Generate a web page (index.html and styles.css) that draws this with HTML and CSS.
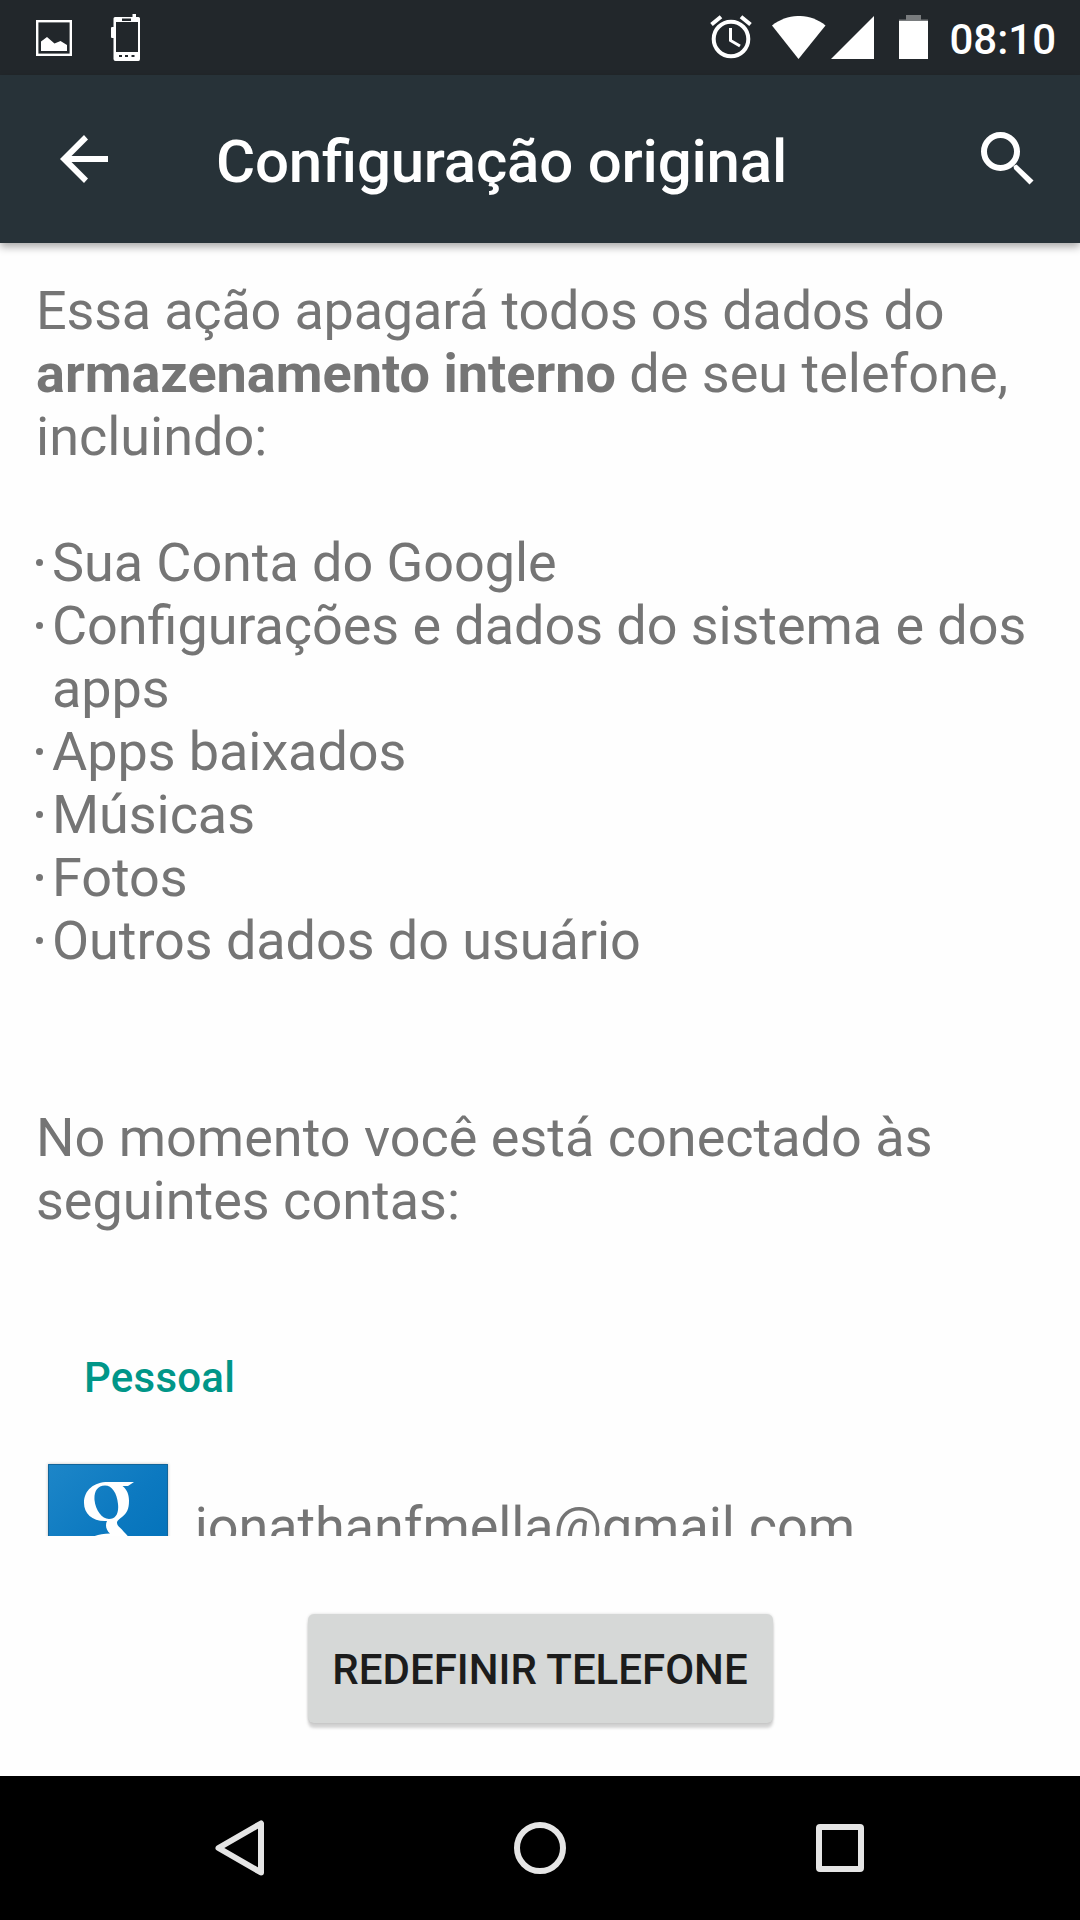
FILE: index.html
```html
<!DOCTYPE html>
<html lang="pt-BR">
<head>
  <meta charset="UTF-8">
  <meta name="viewport" content="width=device-width, initial-scale=1.0">
  <title>Configuração original</title>
  <link rel="stylesheet" href="styles.css">
</head>
<body>

  <div class="status-bar">
    <svg class="picture-icon" width="36" height="36" viewBox="0 0 36 36">
      <rect x="1.2" y="1.2" width="33.6" height="33.6" fill="none" stroke="#fff" stroke-width="2.4"/>
      <path d="M5 31V21.500L11 17L18.500 23.500L24.500 21L31 25V31Z" fill="#fff"/>
    </svg>
    <svg class="phone-icon" width="30" height="48" viewBox="0 0 30 48">
      <path d="M4 3H21.500V0H25V3H27.500Q29 3 29 4.500V45Q29 47 27.500 47H4.500Q2.500 47 2.500 45V24H1Q0 24 0 23V14Q0 13 1 13H2.500V4.500Q2.500 3 4 3ZM5 8V38H27V8ZM11 4.500V7H20V4.500ZM8 41V43H11V41ZM14 41V43H17V41ZM20.500 41V43H23.500V41Z" fill="#fff" fill-rule="evenodd"/>
    </svg>
    <div class="status-right">
      <svg class="alarm-icon" width="42" height="44" viewBox="0 0 42 44">
        <circle cx="21" cy="24" r="17.300" fill="none" stroke="#fff" stroke-width="4"/>
        <path d="M20.500 13V25.500L30 31" fill="none" stroke="#fff" stroke-width="3"/>
        <path d="M1.500 9.500L11 1.700M40.500 9.500L31 1.700" stroke="#fff" stroke-width="4"/>
      </svg>
      <svg class="wifi-icon" width="54" height="43" viewBox="0 0 54 43">
        <path d="M0 9.500C16 -3.200 38 -3.200 53.500 9.500L26.500 43Z" fill="#fff"/>
      </svg>
      <svg class="signal-icon" width="43" height="43" viewBox="0 0 43 43">
        <path d="M0 43L43 0V43Z" fill="#fff"/>
      </svg>
      <svg class="battery-icon" width="29" height="44" viewBox="0 0 29 44">
        <path d="M7 0H22V4.500H29V6H0V4.500H7Z" fill="#797c7e"/>
        <rect y="6" width="29" height="38" fill="#fff"/>
      </svg>
      <span class="clock">08:10</span>
    </div>
  </div>

  <header class="app-bar">
    <svg class="back-icon" width="48" height="48" viewBox="0 0 48 48">
      <path d="M48 21V27H11.500L28 43.600L24 48L0 24L24 0L28 4.400L11.500 21Z" fill="#fff"/>
    </svg>
    <h1 class="title">Configuração original</h1>
    <svg class="search-icon" width="54" height="54" viewBox="0 0 54 54">
      <circle cx="19.500" cy="19.500" r="16.500" fill="none" stroke="#fff" stroke-width="6"/>
      <path d="M32.500 34L35.500 32.500L52.500 48.500L48.500 52.500L33 37Z" fill="#fff"/>
    </svg>
  </header>

  <main class="content">
    <p><span class="tight">Essa ação apagará todos os dados do</span> <b>armazenamento interno</b> de seu telefone, incluindo:</p>
    <ul class="data-list">
      <li>Sua Conta do Google</li>
      <li>Configurações e dados do sistema e dos apps</li>
      <li>Apps baixados</li>
      <li>Músicas</li>
      <li>Fotos</li>
      <li>Outros dados do usuário</li>
    </ul>
    <p class="accounts-text">No momento você está conectado às seguintes contas:</p>
    <h2 class="section-title">Pessoal</h2>
    <div class="account">
      <svg class="account-icon" width="120" height="120" viewBox="0 0 120 120">
        <defs>
          <linearGradient id="blue" x1="0" y1="0" x2="1" y2="1">
            <stop offset="0" stop-color="#1d86c8"/>
            <stop offset="0.5" stop-color="#0c79c0"/>
            <stop offset="1" stop-color="#0070b8"/>
          </linearGradient>
        </defs>
        <rect width="120" height="120" fill="url(#blue)"/>
        <path d="M0.500 120V0.500H119.500V120" fill="none" stroke="#12659a"/>
        <path d="M86 18L80 22H74.500C79.500 26 81 31 81 37C81 45 79 49 74 53C70 56 69 57 69 59C69 62 73 64 76 68C83 75 86 80 86 88C86 101 75 108 58 108C43 108 34 101 34 91C34 77 43 70 62 69.500C58 66 57 61 59 57C45 58 36 50 36 39C36 26 46 18 60 18ZM57 21.500C49 21.500 46 28 46.500 36C47.500 46 54 55 61 55C68 55 71 49 70 40C69 29 64 21.500 57 21.500ZM65 73.500C51 73.500 43 79 43 88C43 97 50 102 61 102C71 102 77 97 77 90C77 83 73 79 65 73.500Z" fill="#fff" fill-rule="evenodd"/>
      </svg>
      <span>jonathanfmella@gmail.com</span>
    </div>
  </main>

  <footer class="footer">
    <button class="reset-button">REDEFINIR TELEFONE</button>
  </footer>

  <nav class="nav-bar">
    <svg width="60" height="60" viewBox="0 0 60 60">
      <path d="M8.500 30L51 5.500V54.500Z" fill="none"/>
    </svg>
    <svg width="60" height="60" viewBox="0 0 60 60">
      <circle cx="30" cy="30" r="23" fill="none"/>
    </svg>
    <svg width="60" height="60" viewBox="0 0 60 60">
      <rect x="9" y="9" width="42" height="42" rx="1" fill="none"/>
    </svg>
  </nav>

</body>
</html>
```
FILE: styles.css
```css
* {
  box-sizing: border-box;
}

body {
  display: flex;
  flex-direction: column;
  width: 1080px;
  height: 1920px;
  margin: 0;
  overflow: hidden;
  font-family: Roboto, sans-serif;
  font-feature-settings: "liga" 1;
  background-color: #fefefe;
}

svg {
  display: block;
  flex-shrink: 0;
}

/* Status bar */
.status-bar {
  display: flex;
  align-items: flex-start;
  height: 75px;
  flex-shrink: 0;
  padding: 0 24px 0 36px;
  background-color: #22272b;
}

.picture-icon {
  margin-top: 20px;
}

.phone-icon {
  margin: 14px 0 0 39px;
}

.status-right {
  display: flex;
  margin-left: auto;
}

.alarm-icon {
  margin: 15px 20px 0 0;
}

.wifi-icon {
  margin: 16px 5px 0 0;
}

.signal-icon {
  margin: 16px 25px 0 0;
}

.battery-icon {
  margin: 15px 21px 0 0;
}

.clock {
  margin-top: 15px;
  font-size: 42px;
  font-weight: 500;
  line-height: 50px;
  color: #fff;
}

/* App bar */
.app-bar {
  display: flex;
  align-items: center;
  height: 168px;
  flex-shrink: 0;
  padding: 0 45px 0 60px;
  background-color: #273238;
  box-shadow: 0 4px 8px rgba(0, 0, 0, 0.33);
}

.title {
  flex: 1;
  margin: 5px 0 0 108px;
  font-size: 60px;
  font-weight: 500;
  line-height: 70px;
  letter-spacing: -0.2px;
  color: #fff;
}

/* Scrollable content */
.content {
  height: 1293px;
  flex-shrink: 0;
  padding: 36px 36px 0;
  overflow: hidden;
  font-size: 54px;
  line-height: 63px;
  color: #757575;
}

.content p {
  margin: 0;
}

.tight {
  letter-spacing: -0.2px;
}

.data-list {
  margin: 63px 0 0;
  padding: 0;
  list-style: none;
  letter-spacing: -0.07px;
}

.data-list li {
  display: flex;
  gap: 9px;
}

.data-list li::before {
  content: "";
  flex-shrink: 0;
  width: 7px;
  height: 7px;
  margin-top: 28px;
  border-radius: 50%;
  background-color: #757575;
}

.content .accounts-text {
  margin-top: 134px;
}

.section-title {
  margin: 121px 0 0 48px;
  font-size: 42px;
  font-weight: 500;
  line-height: 50px;
  letter-spacing: 0.25px;
  color: #009688;
}

.account {
  display: flex;
  gap: 27px;
  margin: 61px 0 0 12px;
}

.account-icon {
  box-shadow: 0 0 3px rgba(0, 0, 0, 0.25);
}

.account span {
  margin-top: 31px;
  letter-spacing: -0.1px;
}

/* Reset button */
.footer {
  display: flex;
  flex: 1;
  justify-content: center;
  align-items: flex-start;
  padding-top: 78px;
}

.reset-button {
  width: 465px;
  height: 109px;
  padding: 2px 0 0;
  border: none;
  border-radius: 6px;
  font-family: inherit;
  font-size: 42px;
  font-weight: 500;
  color: #1c1c1c;
  background-color: #d6d8d7;
  box-shadow: 0 5px 3px rgba(0, 0, 0, 0.17), 0 0 3px rgba(0, 0, 0, 0.15);
}

/* Navigation bar */
.nav-bar {
  display: flex;
  justify-content: center;
  align-items: center;
  gap: 240px;
  height: 144px;
  flex-shrink: 0;
  background-color: #000;
}

.nav-bar svg {
  stroke: #e5e5e5;
  stroke-width: 6px;
  stroke-linejoin: round;
}
```
